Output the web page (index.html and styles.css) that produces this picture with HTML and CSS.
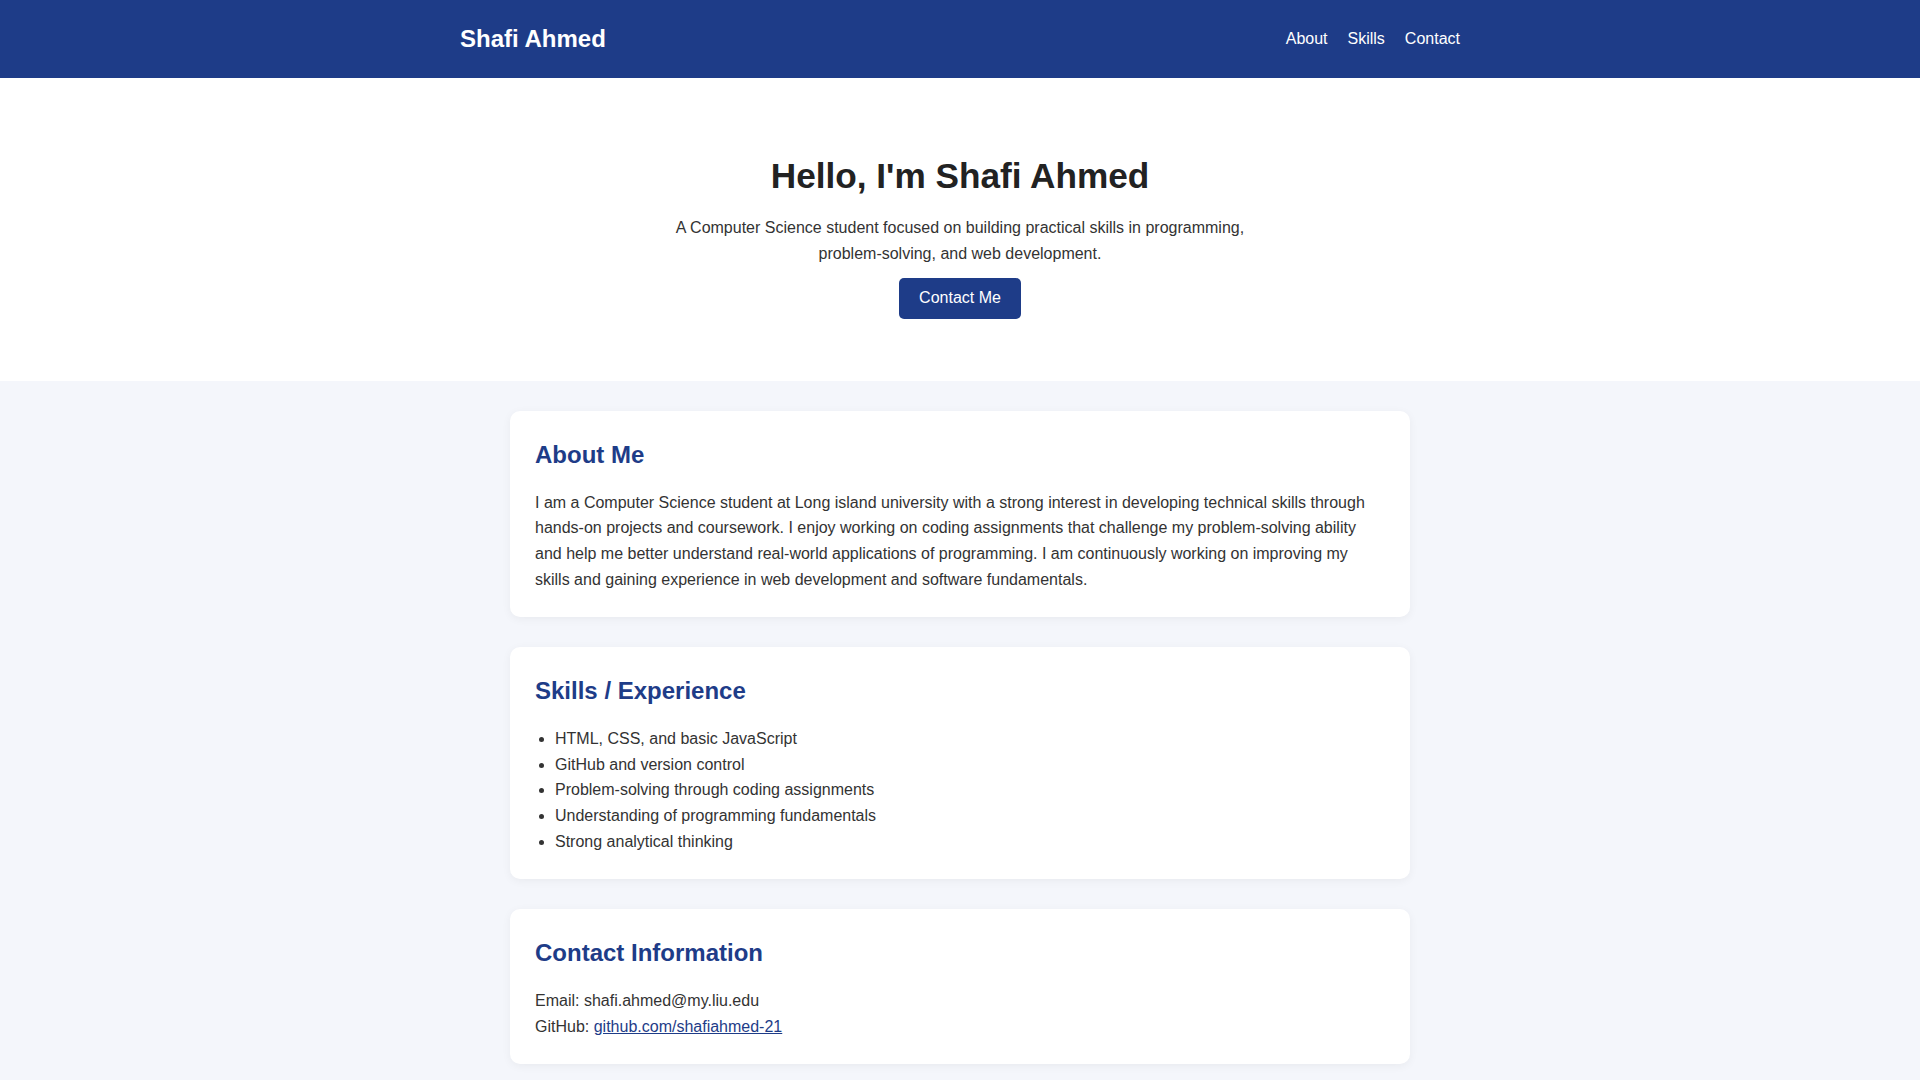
FILE: index.html
```html
<!DOCTYPE html>
<html lang="en">
<head>
<meta charset="UTF-8">
<title>Shafi Ahmed</title>
<link rel="stylesheet" href="styles.css">
</head>
<body>
<header class="site-header">
  <div class="header-inner">
    <div class="brand">Shafi Ahmed</div>
    <nav class="nav">
      <a href="#about">About</a>
      <a href="#skills">Skills</a>
      <a href="#contact">Contact</a>
    </nav>
  </div>
</header>
<section class="hero">
  <h1>Hello, I'm Shafi Ahmed</h1>
  <p>A Computer Science student focused on building practical skills in programming, problem-solving, and web development.</p>
  <a class="btn" href="#contact">Contact Me</a>
</section>
<main class="main">
  <section class="card" id="about">
    <h2>About Me</h2>
    <p>I am a Computer Science student at Long island university with a strong interest in developing technical skills through hands-on projects and coursework. I enjoy working on coding assignments that challenge my problem-solving ability and help me better understand real-world applications of programming. I am continuously working on improving my skills and gaining experience in web development and software fundamentals.</p>
  </section>
  <section class="card" id="skills">
    <h2>Skills / Experience</h2>
    <ul>
      <li>HTML, CSS, and basic JavaScript</li>
      <li>GitHub and version control</li>
      <li>Problem-solving through coding assignments</li>
      <li>Understanding of programming fundamentals</li>
      <li>Strong analytical thinking</li>
    </ul>
  </section>
  <section class="card" id="contact">
    <h2>Contact Information</h2>
    <p>Email: shafi.ahmed@my.liu.edu</p>
    <p>GitHub: <a href="#">github.com/shafiahmed-21</a></p>
  </section>
</main>
</body>
</html>
```
FILE: styles.css
```css
* { box-sizing: border-box; }
body {
  margin: 0;
  font-family: "Liberation Sans", Arial, sans-serif;
  font-size: 16px;
  line-height: 1.6;
  color: #333;
  background: #f4f6fb;
}
.site-header {
  background: #1e3c88;
  color: #fff;
  padding: 20px 0;
}
.header-inner {
  width: 1000px;
  margin: 0 auto;
  display: flex;
  justify-content: space-between;
  align-items: center;
}
.brand {
  font-size: 24px;
  font-weight: bold;
  line-height: 38px;
}
.nav { display: flex; gap: 20px; }
.nav a { color: #fff; text-decoration: none; }
.hero {
  background: #fff;
  text-align: center;
  padding: 70px 20px 62.5px;
}
.hero h1 {
  margin: 0 0 11px;
  font-size: 35.2px;
  line-height: 1.6;
  color: #222;
}
.hero p {
  max-width: 600px;
  margin: 0 auto 11px;
  color: #333;
}
.btn {
  display: inline-block;
  background: #1e3c88;
  color: #fff;
  text-decoration: none;
  padding: 7.5px 20px;
  line-height: 26px;
  border-radius: 5px;
}
.main {
  width: 900px;
  margin: 30px auto 0;
}
.card {
  background: #fff;
  border-radius: 10px;
  padding: 25px;
  margin-bottom: 30px;
  box-shadow: 0 2px 10px rgba(0, 0, 0, 0.05);
}
.card h2 {
  margin: 0 0 15.5px;
  font-size: 24px;
  color: #1e3c88;
}
.card p { margin: 0; }
.card ul { margin: 0; padding-left: 20px; }
.card a { color: #1e3c88; }
```
